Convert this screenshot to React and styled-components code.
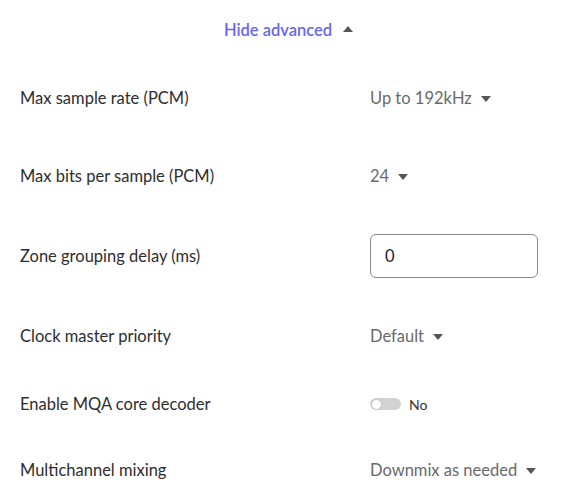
import * as React from "react"
import styled, { createGlobalStyle } from "styled-components"

const GlobalStyle = createGlobalStyle`
  body {
    margin: 0;
    background: #fff;
    font-family: Lato, "Noto Sans", sans-serif;
  }
`

const PageStyles = styled.div`
  width: 585px;
  height: 500px;
  overflow: hidden;
  padding: 0 20px;
  box-sizing: border-box;
`

const AdvancedToggle = styled.button`
  display: flex;
  align-items: center;
  justify-content: center;
  gap: 11px;
  width: 100%;
  height: 60px;
  padding: 0 8px 0 0;
  border: 0;
  background: none;
  color: #6767ee;
  font-family: Lato, sans-serif;
  font-weight: 600;
  font-size: 16.5px;
  cursor: pointer;
`

const Caret = styled.span`
  display: inline-block;
  width: 0;
  height: 0;
  border-left: 5px solid transparent;
  border-right: 5px solid transparent;
  ${({ $up }) =>
    $up ? "border-bottom: 6px solid #555;" : "border-top: 6px solid #555;"}
  margin-top: ${({ $up }) => ($up ? "-2px" : "1px")};
`

const SettingRow = styled.div`
  display: grid;
  grid-template-columns: 350px 1fr;
  align-items: center;
  height: ${({ $h }) => $h}px;
`

const Label = styled.div`
  color: #2e2e2e;
  font-size: 16.5px;
`

const Dropdown = styled.div`
  display: flex;
  align-items: center;
  gap: 9px;
  color: #6a6a6a;
  font-size: 16.5px;
`

const TextInput = styled.input`
  width: 168px;
  height: 44px;
  box-sizing: border-box;
  padding: 0 14px;
  border: 1px solid #888;
  border-radius: 6px;
  font-family: Lato, sans-serif;
  font-size: 16.5px;
  color: #222;
  outline: none;
`

const SwitchWrap = styled.div`
  display: flex;
  align-items: center;
  gap: 8px;
  color: #333;
  font-size: 14px;
`

const Track = styled.span`
  position: relative;
  display: inline-block;
  width: 31px;
  height: 12px;
  border-radius: 6px;
  background: #d2d2d2;
`

const Knob = styled.span`
  position: absolute;
  left: 1px;
  top: 50%;
  width: 11px;
  height: 11px;
  margin-top: -5.5px;
  box-sizing: border-box;
  border-radius: 50%;
  background: #fff;
  border: 1px solid #c4c4c4;
`

const settings = [
  { label: "Max sample rate (PCM)", value: "Up to 192kHz", h: 76 },
  { label: "Max bits per sample (PCM)", value: "24", h: 80 },
  { label: "Zone grouping delay (ms)", input: "0", h: 80 },
  { label: "Clock master priority", value: "Default", h: 80 },
  { label: "Enable MQA core decoder", toggle: "No", h: 56 },
  { label: "Multichannel mixing", value: "Downmix as needed", h: 76 },
]

export default function App() {
  return (
    <>
      <GlobalStyle />
      <PageStyles>
        <AdvancedToggle>
          <span>Hide advanced</span>
          <Caret $up />
        </AdvancedToggle>
        {settings.map((s) => (
          <SettingRow key={s.label} $h={s.h}>
            <Label>{s.label}</Label>
            {s.input !== undefined ? (
              <TextInput defaultValue={s.input} />
            ) : s.toggle ? (
              <SwitchWrap>
                <Track>
                  <Knob />
                </Track>
                {s.toggle}
              </SwitchWrap>
            ) : (
              <Dropdown>
                <span>{s.value}</span>
                <Caret />
              </Dropdown>
            )}
          </SettingRow>
        ))}
      </PageStyles>
    </>
  )
}
